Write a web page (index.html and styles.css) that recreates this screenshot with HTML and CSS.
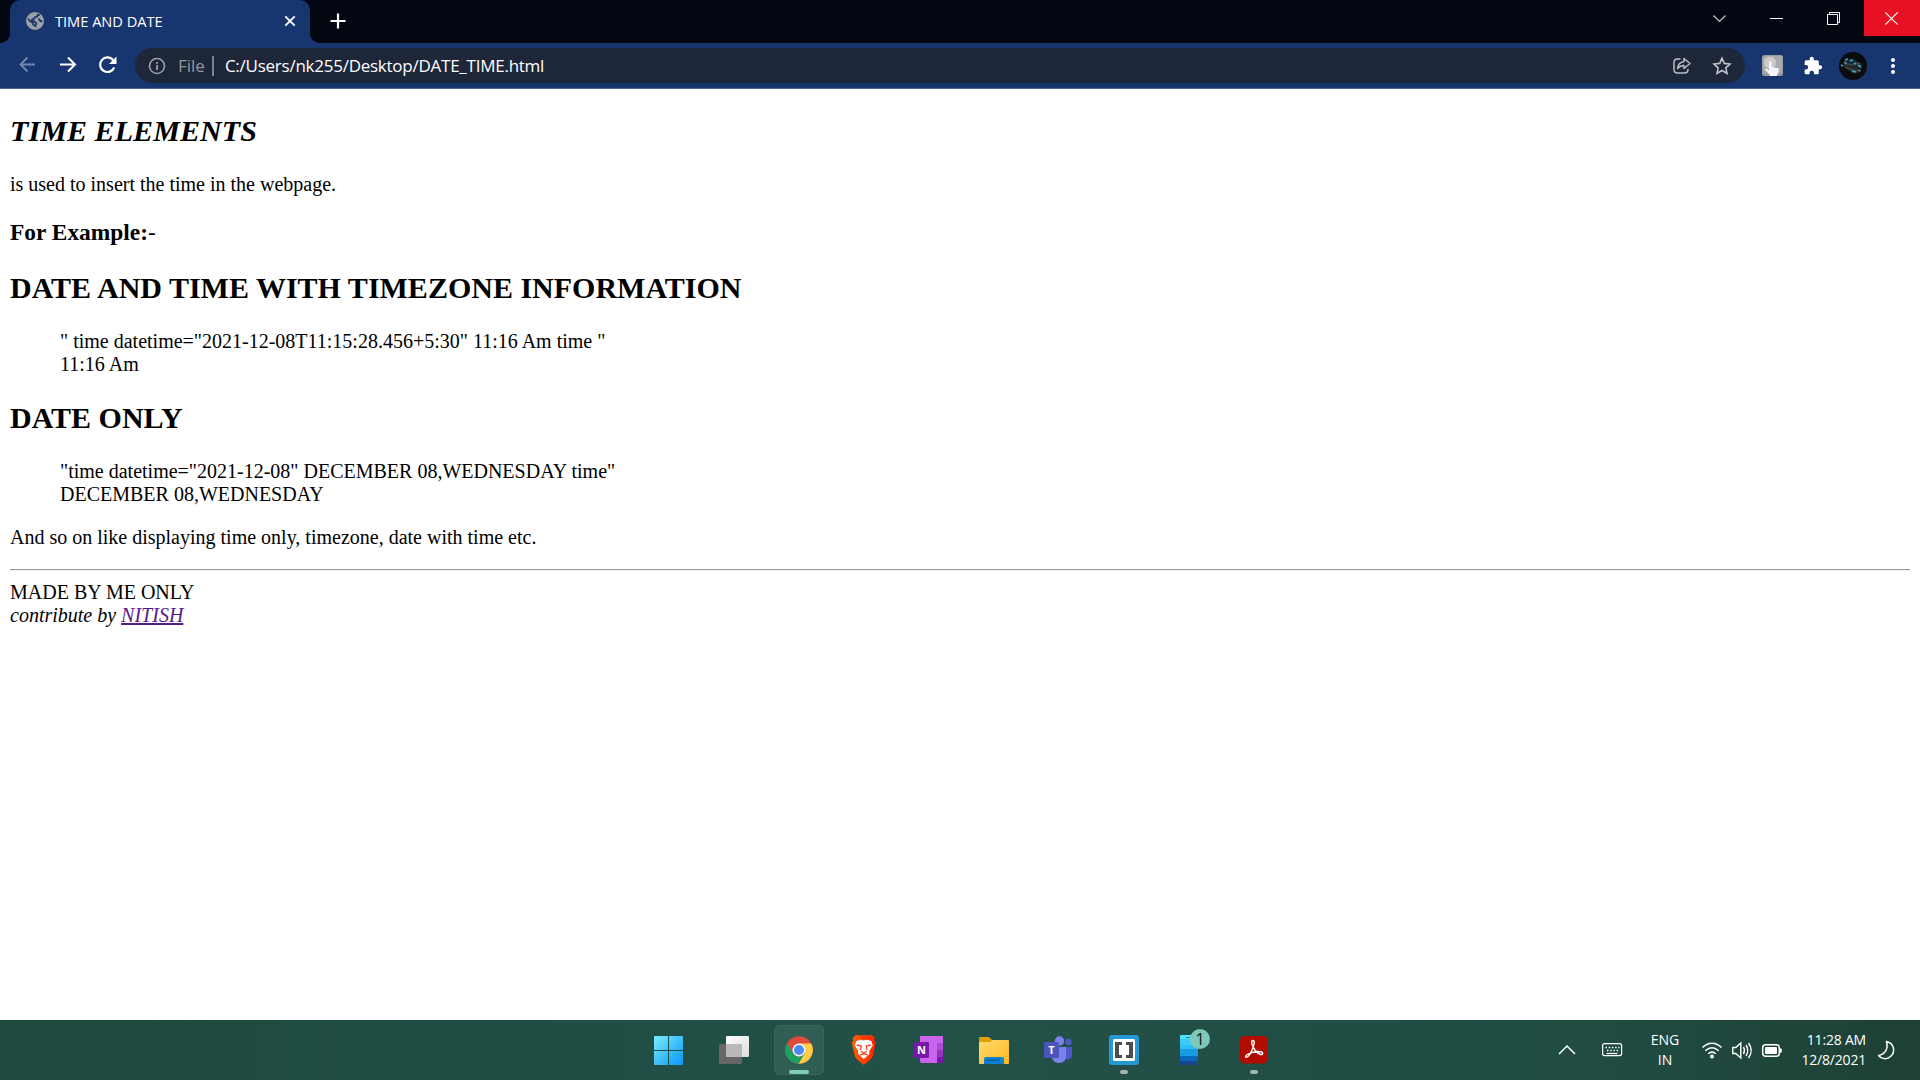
FILE: index.html
```html
<!DOCTYPE html>
<html lang="en">
<head>
<meta charset="utf-8">
<title>TIME AND DATE</title>
<link rel="stylesheet" href="styles.css">
</head>
<body>
<div class="screen">
  <header class="titlebar">
    <div class="tab">
      <svg class="globe" viewBox="0 0 18 18"><circle cx="9" cy="9" r="9" fill="#9aa0a6"/><path d="M2 6.8 5 10l2 .4v2l2.3 1.7 1-2.5-1.4-2-3.1-.8.2-1.4 2-.5.8-1.8 2.4-.6.5-1.7 2 .3M12.5 6.500l2 2.800 1.800-.4" fill="none" stroke="#17356f" stroke-width="1.700"/></svg>
      <span class="tab-title">TIME AND DATE</span>
      <svg class="tab-close" viewBox="0 0 12 12"><path d="m1.300 1.300 9.400 9.400m0-9.400-9.400 9.400" stroke="#fff" stroke-width="1.900"/></svg>
    </div>
    <svg class="new-tab" viewBox="0 0 16 16"><path d="M8 .5v15M.5 8h15" stroke="#fff" stroke-width="2.200"/></svg>
    <div class="window-controls">
      <svg viewBox="0 0 56 36"><path d="m17.500 15.500 6 6 6-6" fill="none" stroke="#c4c6ca" stroke-width="1.200"/></svg>
      <svg viewBox="0 0 56 36"><path d="M18 18.500h13" stroke="#fff"/></svg>
      <svg viewBox="0 0 56 36"><path d="M19.500 14.500h10v10h-10zM21.500 14v-1.500h10v10H30" fill="none" stroke="#fff"/></svg>
      <svg class="close" viewBox="0 0 56 36"><path d="m21.300 12.300 12.400 12.400m0-12.400L21.300 24.700" stroke="#fff" stroke-width="1.200"/></svg>
    </div>
  </header>
  <nav class="toolbar">
    <svg class="nav" viewBox="0 0 40 45"><path d="M35 21.500H20.500M27.500 14.500l-7 7 7 7" fill="none" stroke="#7385ab" stroke-width="2"/></svg>
    <svg class="nav" viewBox="0 0 40 45"><path d="M20 21.500h15M28 14.500l7 7-7 7" fill="none" stroke="#fff" stroke-width="2"/></svg>
    <svg class="nav" viewBox="0 0 40 45"><path d="M34.200 24.500a7.300 7.300 0 1 1-1.700-8.100l1.500 1.600" fill="none" stroke="#fff" stroke-width="2.200"/><path d="M36.500 13.500v7.500H29z" fill="#fff"/></svg>
    <div class="omnibox">
      <svg class="info" viewBox="0 0 18 18"><circle cx="9" cy="9" r="7.500" fill="none" stroke="#9aa0a6" stroke-width="1.600"/><path d="M9 8v5M9 5v1.700" stroke="#9aa0a6" stroke-width="1.800"/></svg>
      <span class="scheme">File</span>
      <span class="divider"></span>
      <span class="url">C:/Users/nk255/Desktop/DATE_TIME.html</span>
      <svg class="share" viewBox="0 0 20 20"><path d="M8.500 3H5.500Q2 3 2 6.500v7Q2 17 5.500 17h7q3.500 0 3.500-3.500V13" fill="none" stroke="#b9bdc4" stroke-width="1.500"/><path d="M12 2.500 18 7.500l-6 5V9.500Q8 9.500 5.500 12.500 6 6.500 12 5.500z" fill="none" stroke="#b9bdc4" stroke-width="1.500" stroke-linejoin="round"/></svg>
      <svg class="star" viewBox="0 0 20 20"><path d="m10 2.200 2.300 5.200 5.700.6-4.200 3.800 1.200 5.600-5-2.900-5 2.900 1.200-5.600L2 8l5.700-.6z" fill="none" stroke="#c0c3c9" stroke-width="1.600"/></svg>
    </div>
    <svg class="ext" viewBox="0 0 21 21"><rect width="21" height="21" rx="2.500" fill="#999b9f"/><rect x="1" y="1" width="19" height="17" fill="#aaa"/><circle cx="8" cy="7.500" r="6" fill="#cbcbcb"/><path d="M7 7.500q0-1.500 1.300-1.500t1.300 1.500v5q1.500-1 2.500.2 1.500-.8 2.300.4 2.400-.6 2.500 1.500 0 3.500-2.400 6.400H8.600L3 14.500q1-1.700 2.500-.2L7 15.500z" fill="#f3f5fb"/></svg>
    <svg class="puzzle" viewBox="0 0 24 24"><path d="M20.500 11H19V7c0-1.100-.9-2-2-2h-4V3.500a2.500 2.500 0 0 0-5 0V5H4c-1.100 0-2 .9-2 2v3.800h1.500a2.700 2.700 0 0 1 0 5.400H2V20c0 1.100.9 2 2 2h3.800v-1.500a2.700 2.700 0 0 1 5.400 0V22H17c1.100 0 2-.9 2-2v-4h1.500a2.500 2.500 0 0 0 0-5z" fill="#fff"/></svg>
    <svg class="avatar" viewBox="0 0 28 28"><circle cx="14" cy="14" r="14" fill="#090b0f"/><path d="m4 9 8-3 11 6-1 8-8 2-9-7z" fill="#24282c"/><path d="m5 11 7 2 9-2M6 15l8 3 7 1" fill="none" stroke="#41464a" stroke-width="1.500"/><path d="m6 8 3-1m2 2 3-1m1 3 2 1M2 13l2 1m9 5 4 1m2-7 3 2m-2 4 1-1M6 10l1 2" fill="none" stroke="#36a9cf" stroke-width="1.700"/></svg>
    <svg class="menu" viewBox="0 0 4 18"><g fill="#fff"><circle cx="2" cy="3" r="2"/><circle cx="2" cy="9" r="2"/><circle cx="2" cy="15" r="2"/></g></svg>
  </nav>
  <main class="page">
    <h2 class="intro"><i>TIME ELEMENTS</i></h2>
    <p>is used to insert the time in the webpage.</p>
    <h3>For Example:<span class="dash">-</span></h3>
    <h2>DATE AND TIME WITH TIMEZONE INFORMATION</h2>
    <blockquote>" time datetime="2021-12-08T11:15:28.456+5:30" 11:16 Am time "<br><time>11:16 Am</time></blockquote>
    <h2>DATE ONLY</h2>
    <blockquote>"time datetime="2021-12-08" DECEMBER 08,WEDNESDAY time"<br><time>DECEMBER 08,WEDNESDAY</time></blockquote>
    <p>And so on like displaying time only, timezone, date with time etc.</p>
    <hr>
    <footer>MADE BY ME ONLY<address>contribute by <a href="#">NITISH</a></address></footer>
  </main>
  <footer class="taskbar">
    <div class="apps">
      <svg viewBox="0 0 65 60"><defs><linearGradient id="win" x1="18" y1="16" x2="47" y2="45" gradientUnits="userSpaceOnUse"><stop stop-color="#78eeff"/><stop offset="1" stop-color="#0995f5"/></linearGradient></defs><path d="M18 17q0-1 1-1h13v14H18zM33 16h13q1 0 1 1v13H33zM18 31h14v14H19q-1 0-1-1zM33 31h14v13q0 1-1 1H33z" fill="url(#win)"/></svg>
      <svg viewBox="0 0 65 60"><defs><linearGradient id="tv" x2="1" y2="1"><stop stop-color="#fff"/><stop offset="1" stop-color="#dcdcdc"/></linearGradient></defs><rect x="18" y="24" width="23" height="20" rx="1" fill="#666"/><rect x="25" y="16" width="23" height="21" rx="1" fill="url(#tv)"/><path d="M25 24h16v13H25z" fill="#b9b9b9"/></svg>
      <svg viewBox="0 0 65 60"><rect x="8.500" y="5.500" width="49" height="49" rx="5" fill="#305e54" stroke="#3a675d"/><circle cx="33" cy="30" r="13.800" fill="#dd4b3e"/><path d="M33 23.500h12.200A13.800 13.800 0 0 1 32.500 43.800l6.100-10.500z" fill="#ffcd46"/><path d="M21 23.200 27.400 33.300A6.500 6.500 0 0 0 35 36.200L38.600 33.300 32.500 43.800A13.800 13.800 0 0 1 21 23.200z" fill="#1da261"/><circle cx="33" cy="30" r="6.500" fill="#f4f6fa"/><circle cx="33" cy="30" r="5" fill="#4c8bf5"/><rect x="23" y="50" width="20" height="4" rx="2" fill="#85cbbb"/></svg>
      <svg viewBox="0 0 65 60"><defs><linearGradient id="br"><stop stop-color="#ff6000"/><stop offset="1" stop-color="#ff2100"/></linearGradient></defs><g transform="translate(.8)"><path d="m24 15 3.300.2h9.400l3.300-.2 3.200 3.200-.7 2 1.500 2.500-3 13.300q-.6 2-2.200 3.200L32 45l-6.800-5.800Q23.600 38 23 36l-3-13.300 1.500-2.500-.7-2z" fill="url(#br)"/><path d="m24.500 21 4-1.300 3.500.8 3.500-.8 4 1.300 1.500 4.500-3.500 5.500.2 3-5.700 5-5.700-5 .2-3-3.500-5.500z" fill="#fff"/><path d="m25 25 4.500 1-.7 4m10.200-5-4.500 1 .7 4M28 35l4-1.200 4 1.200M29 31.500l3 1.300 3-1.300" fill="none" stroke="#fb401d" stroke-width="1.300"/></g></svg>
      <svg viewBox="0 0 65 60"><path d="M24 16h23v27H26q-2 0-2-2z" fill="#ca64ea"/><path d="M41 23h6v7h-6z" fill="#ae4bd5"/><path d="M41 30h6v7h-6z" fill="#9332bf"/><path d="M41 37h6v6h-6z" fill="#7719aa"/><rect x="18" y="22" width="15" height="16" rx="1.300" fill="#7719aa"/><text x="25.500" y="34" class="letter">N</text></svg>
      <svg viewBox="0 0 65 60"><defs><linearGradient id="fo" x2="1" y2="1"><stop stop-color="#ffda70"/><stop offset="1" stop-color="#ffb91d"/></linearGradient></defs><path d="M18 18q0-1 1-1h9l3 3v4H18z" fill="#e0a000"/><path d="M18 22h11l2-2h16q1 0 1 1v22q0 1-1 1H19q-1 0-1-1z" fill="url(#fo)"/><path d="M23 44v-5q0-2 2-2h16q2 0 2 2v5z" fill="#0b81d1"/><path d="M26 40h13" stroke="#064b86" stroke-width="1"/></svg>
      <svg viewBox="0 0 65 60"><circle cx="42.500" cy="22" r="3.200" fill="#5059c9"/><path d="M38 27h8v7q0 5-4 5.500-4 0-4-4z" fill="#5059c9"/><circle cx="33.500" cy="21" r="4.700" fill="#7b83eb"/><path d="M26 27h14v9q0 7-7 7t-7-7z" fill="#7b83eb"/><rect x="18" y="22" width="15" height="16" rx="1.300" fill="#4b53bc"/><text x="25.500" y="34" class="letter">T</text></svg>
      <svg viewBox="0 0 65 60"><rect x="18" y="15" width="30" height="30" rx="3" fill="#2597d5"/><rect x="22" y="19" width="22" height="22" rx="1.500" fill="#fff"/><path d="M31 22h-7v16h7v-3h-3V25h3zM35 22h7v16h-7v-3h3V25h-3z" fill="#4d4d4d"/><rect x="29" y="50" width="8" height="4" rx="2" fill="#a2b5af"/></svg>
      <svg viewBox="0 0 65 60"><path d="M24 16q0-1 1-1h17v9H24z" fill="#50e6ff"/><path d="M24 19h18v6H24z" fill="#3ccbf4"/><path d="M24 25h18v8H24z" fill="#32bef0"/><path d="M24 29h18v7H24z" fill="#199be2"/><path d="M24 36h18v5H24z" fill="#0669bc"/><path d="M24 41h18v4H24z" fill="#17468a"/><path d="M30 17.500h4" stroke="#1674a0"/><circle cx="44" cy="19" r="10" fill="#7fc8b8"/><text x="44" y="24.500" class="badge">1</text></svg>
      <svg viewBox="0 0 65 60"><rect x="19" y="16" width="27.500" height="27.500" rx="4.500" fill="#b30b00"/><path d="M32 20.500q-1.800 0-1.300 2.500.5 3 3.200 7 2.700 3.500 5.800 4.500 2 .2 2-1.200-.2-1.800-4.500-1.800-6 .2-10 2.500-3.500 2-2.300 3.200 1.600.8 4-3 3.300-5.200 4.300-11 .2-2.600-1.200-2.700z" fill="none" stroke="#fff" stroke-width="1.400"/><rect x="29" y="50" width="8" height="4" rx="2" fill="#a2b5af"/></svg>
    </div>
    <div class="tray">
      <svg class="chev" viewBox="0 0 34 60"><path d="m9 34 8-8 8 8" fill="none" stroke="#fff" stroke-width="1.500"/></svg>
      <svg class="keys" viewBox="0 0 56 60"><rect x="18.600" y="23.600" width="19" height="12" rx="2" fill="none" stroke="#fff" stroke-width="1.200"/><path d="M21.500 27.500h14M23 30.500h12" stroke="#fff" stroke-width="1.500" stroke-dasharray="1.500 1.700"/><path d="M22.500 33.500h11" stroke="#fff" stroke-width="1.200"/></svg>
      <div class="lang"><span>ENG</span><span>IN</span></div>
      <svg class="status" viewBox="0 0 110 60"><g fill="none" stroke="#fff" stroke-width="1.500"><path d="M12.500 27.500q9.500-8.500 19 0M15.300 30.700q6.700-6 13.400 0M18.200 33.800q3.800-3.300 7.600 0"/><path d="M42.800 27.500h3l5-4.500v15l-5-4.500h-3zM53.500 27q2 3.500 0 7M56 25q3.500 5.500 0 11M58.500 23q5.500 7.500 0 15" stroke-width="1.400"/><rect x="72.700" y="24.700" width="16.600" height="11.600" rx="3"/></g><circle cx="22" cy="36.500" r="2" fill="#fff"/><rect x="75" y="27" width="12" height="7" rx="1" fill="#fff"/><path d="M90 28q2 0 2 2.500T90 33z" fill="#fff"/></svg>
      <div class="clock"><span>11:28 AM</span><span>12/8/2021</span></div>
      <svg class="moon" viewBox="0 0 54 60"><path d="M20.500 21.500C28 23 30 32 24.500 36.500 21 40 15 39 12.500 35.500 19 34.500 22.500 29 20.500 21.500z" fill="none" stroke="#fff" stroke-width="1.500" stroke-linejoin="round"/></svg>
    </div>
  </footer>
</div>
</body>
</html>
```
FILE: styles.css
```css
* { box-sizing: border-box; }
body { margin: 0; }
svg { display: block; flex: none; }

.screen {
  display: flex;
  flex-direction: column;
  width: 1920px;
  height: 1080px;
  overflow: hidden;
  background: #fff;
  font-family: "Open Sans", "Noto Sans", sans-serif;
}

/* Window title bar */
.titlebar { display: flex; flex: none; height: 43px; padding-left: 10px; background: #020711; }
.tab {
  position: relative;
  display: flex;
  align-items: center;
  width: 300px;
  height: 43px;
  padding: 0 14px 2px 16px;
  border-radius: 10px 10px 0 0;
  background: #17356f;
  color: #fff;
}
.tab::before, .tab::after {
  content: "";
  position: absolute;
  bottom: 0;
  width: 10px;
  height: 10px;
}
.tab::before { left: -10px; background: radial-gradient(circle at 0 0, #020711 9.5px, #17356f 10.5px); }
.tab::after { right: -10px; background: radial-gradient(circle at 100% 0, #020711 9.5px, #17356f 10.5px); }
.globe { width: 18px; height: 18px; }
.tab-title { margin-left: 11px; font-size: 14.6px; white-space: nowrap; }
.tab-close { width: 12px; height: 12px; margin-left: auto; }
.new-tab { width: 16px; height: 16px; margin: 13px 0 0 20px; }
.window-controls { display: flex; margin-left: auto; }
.window-controls svg { width: 56px; height: 36px; }
.window-controls .close { background: #e81123; }

/* Address bar */
.toolbar {
  display: flex;
  align-items: center;
  flex: none;
  height: 46px;
  border-bottom: 1px solid #4b6494;
  background: #17356f;
}
.nav { width: 40px; height: 45px; }
.omnibox {
  display: flex;
  align-items: center;
  width: 1610px;
  height: 35px;
  margin-left: 15px;
  padding: 0 13px 0 13px;
  border-radius: 18px;
  background: #1e2639;
  white-space: nowrap;
}
.info { width: 18px; height: 18px; }
.scheme { margin-left: 12px; color: #9096a0; font-size: 17px; }
.divider { width: 2px; height: 20px; margin: 0 11px 0 7px; background: #7c828e; }
.url { color: #fff; font-size: 17px; letter-spacing: -0.25px; }
.share { width: 20px; height: 20px; margin-left: auto; }
.star { width: 20px; height: 20px; margin-left: 20px; }
.ext { width: 21px; height: 21px; margin-left: 17px; }
.puzzle { width: 20px; height: 20px; margin-left: 20px; }
.avatar { width: 28px; height: 28px; margin-left: 16px; }
.menu { width: 4px; height: 18px; margin-left: 24px; }

/* Document */
.page {
  flex: 1;
  min-height: 0;
  padding: 0 10px;
  color: #000;
  font: 20px/23px "Liberation Serif", "Times New Roman", serif;
}
.page h2 { margin: 25px 0; font-size: 30px; line-height: 34px; }
.page .intro { letter-spacing: 0.08px; }
.page h3 { margin: 23px 0; font-size: 23.4px; line-height: 27px; }
.page p { margin: 20px 0; }
.page blockquote { margin: 20px 50px; }
.page hr {
  height: 2px;
  margin: 20px 0 10px;
  border: 0;
  border-top: 1px solid #9a9a9a;
  border-bottom: 1px solid #eee;
}
.page address { font-style: italic; }
.page a { color: #551a8b; }
.dash { font-weight: 400; }

/* Taskbar */
.taskbar {
  display: flex;
  justify-content: space-between;
  flex: none;
  height: 60px;
  padding-left: 636px;
  background: linear-gradient(90deg, #1e493f, #225147 50%, #204c42 83%, #1e4035);
  color: #fff;
}
.apps, .tray { display: flex; }
.apps svg { width: 65px; height: 60px; }
.letter { fill: #fff; font: 700 11px "Open Sans", sans-serif; text-anchor: middle; }
.badge { fill: #101c19; font: 17px "Open Sans", sans-serif; text-anchor: middle; }
.tray { width: 370px; }
.chev { width: 34px; height: 60px; }
.keys { width: 56px; height: 60px; }
.status { width: 110px; height: 60px; }
.moon { width: 54px; height: 60px; }
.lang, .clock {
  display: flex;
  flex-direction: column;
  align-items: center;
  justify-content: center;
  width: 50px;
  font-size: 14px;
  line-height: 20px;
  white-space: nowrap;
}
.clock { align-items: flex-end; width: 66px; letter-spacing: -0.2px; }
```
